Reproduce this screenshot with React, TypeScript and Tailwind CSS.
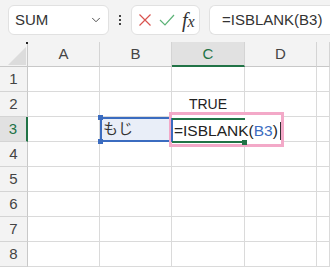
import { ChevronDown } from 'lucide-react';

const font = "font-['Liberation_Sans','Noto_Sans_CJK_JP',sans-serif]";
const cols = ['A', 'B', 'C', 'D', ''];
const rows = [1, 2, 3, 4, 5, 6, 7, 8];

function Toolbar() {
  return (
    <div className="flex h-[42px] items-start gap-0 bg-[#f3f3f3] pt-[5px] pl-[8px]">
      <div className="flex h-[30px] w-[101px] items-center justify-between rounded-[6px] border border-[#e1e1e1] bg-white pl-[6px] pr-[5px]">
        <span className="text-[15px] text-[#333]">SUM</span>
        <ChevronDown size={14} strokeWidth={1.6} className="text-[#444]" />
      </div>
      <div className="flex h-[30px] w-[22px] flex-col items-center justify-center gap-[2px]">
        <span className="h-[2px] w-[2px] bg-[#444]" />
        <span className="h-[2px] w-[2px] bg-[#444]" />
        <span className="h-[2px] w-[2px] bg-[#444]" />
      </div>
      <div className="flex h-[30px] w-[69px] items-center gap-[7px] rounded-[6px] border border-[#e1e1e1] bg-white pl-[6px]">
        <svg width="14" height="14" viewBox="0 0 14 14">
          <path d="M1.5 1.5 L12.5 12.5 M12.5 1.5 L1.5 12.5" stroke="#d9534f" strokeWidth="1.2" fill="none" />
        </svg>
        <svg width="16" height="14" viewBox="0 0 16 14">
          <path d="M1 7 L6 12 L15 2" stroke="#5cb377" strokeWidth="1.2" fill="none" />
        </svg>
        <span className="font-['Liberation_Serif',serif] text-[20px] italic leading-none text-[#333]">
          f<span className="text-[16px]">x</span>
        </span>
      </div>
      <div className="ml-[9px] flex h-[30px] flex-1 items-center rounded-l-[6px] border border-r-0 border-[#e1e1e1] bg-white pl-[12px]">
        <span className="text-[15px] text-[#333]">=ISBLANK(B3)</span>
      </div>
    </div>
  );
}

function Sheet() {
  return (
    <div className="relative">
      <div className="grid grid-cols-[28px_72px_72px_73px_72px_13px] grid-rows-[25px_repeat(8,25px)]">
        <div className="relative border-r border-b border-[#c8c8c8] bg-[#f3f3f3]">
          <svg className="absolute left-[8px] top-[5px]" width="18" height="18" viewBox="0 0 18 18">
            <path d="M18 0 L18 18 L0 18 Z" fill="#dcdcdc" />
          </svg>
          <span className="absolute right-[-1px] top-[0px] h-[2px] w-[2px] bg-[#222]" />
        </div>
        {cols.map((c, i) =>
          c === 'C' ? (
            <div
              key={i}
              className="flex items-center justify-center border-r border-b-2 border-r-[#d4d4d4] border-b-[#217346] bg-[#e1e1e1] pt-[1px] text-[15px] text-[#217346]"
            >
              {c}
            </div>
          ) : (
            <div
              key={i}
              className="flex items-center justify-center border-r border-b border-r-[#d4d4d4] border-b-[#c8c8c8] bg-[#f3f3f3] text-[15px] text-[#444]"
            >
              {c}
            </div>
          )
        )}
        {rows.map((r) => (
          <Row key={r} r={r} />
        ))}
      </div>

      {/* B3 reference highlight */}
      <div className="absolute left-[100px] top-[75px] h-[25px] w-[72px] border-2 border-[#3b6cc0] bg-[#e9eef8]">
        <span className="absolute left-[1px] top-[-1px] text-[15px] text-[#333]">もじ</span>
      </div>
      <span className="absolute left-[98px] top-[73px] h-[5px] w-[5px] bg-[#3b6cc0]" />
      <span className="absolute left-[98px] top-[97px] h-[5px] w-[5px] bg-[#3b6cc0]" />

      {/* C3 editing box */}
      <div className="absolute left-[169px] top-[70px] h-[35px] w-[115px] border-[3px] border-[#f3a9c8] bg-white" />
      <span className="absolute left-[171px] top-[76px] h-[24px] w-[2px] bg-[#3b6cc0]" />
      <span className="absolute left-[172px] top-[76px] h-[2px] w-[73px] bg-[#217346]" />
      <span className="absolute left-[172px] top-[99px] h-[2px] w-[73px] bg-[#217346]" />
      <span className="absolute left-[242px] top-[98px] h-[5px] w-[5px] bg-[#217346]" />
      <div className="absolute left-[174px] top-[78px] flex h-[21px] items-center text-[15.5px] text-[#222]">
        =ISBLANK(<span className="text-[#3b6cc0]">B3</span>)
        <span className="ml-[2px] h-[18px] w-[1px] bg-[#333]" />
      </div>
    </div>
  );
}

function Row({ r }: { r: number }) {
  const active = r === 3;
  return (
    <>
      <div
        className={
          active
            ? 'flex items-center justify-center border-r-2 border-b border-r-[#217346] border-b-[#d4d4d4] bg-[#e1e1e1] text-[15px] text-[#217346]'
            : 'flex items-center justify-center border-r border-b border-r-[#c8c8c8] border-b-[#d4d4d4] bg-[#f3f3f3] text-[15px] text-[#444]'
        }
      >
        {r}
      </div>
      {cols.map((c, i) => (
        <div
          key={i}
          className="flex items-end justify-center border-r border-b border-[#dadada] bg-white pb-[1px] text-[14px] text-[#222]"
        >
          {r === 2 && c === 'C' ? 'TRUE' : ''}
        </div>
      ))}
    </>
  );
}

export default function App() {
  return (
    <div className={`h-[268px] w-[330px] overflow-hidden bg-white ${font}`}>
      <Toolbar />
      <Sheet />
    </div>
  );
}
